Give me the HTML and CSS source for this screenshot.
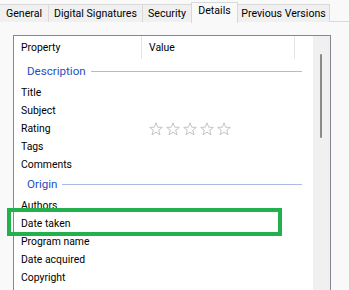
FILE: index.html
```html
<!DOCTYPE html>
<html>

<head>
    <title>Properties - Details</title>
    <link rel="stylesheet" href="styles.css">
</head>

<body>
    <div class="tabs">
        <div class="tab tab-general">General</div>
        <div class="tab tab-signatures">Digital Signatures</div>
        <div class="tab tab-security">Security</div>
        <div class="tab tab-details selected">Details</div>
        <div class="tab tab-versions">Previous Versions</div>
    </div>

    <div class="panel">
        <div class="list-box">
            <div class="list">
                <div class="list-header">
                    <div class="col col-property">Property</div>
                    <div class="col col-value">Value</div>
                </div>

                <div class="group">
                    <span class="group-name">Description</span>
                    <span class="group-line"></span>
                </div>
                <div class="row"><span class="name">Title</span></div>
                <div class="row"><span class="name">Subject</span></div>
                <div class="row">
                    <span class="name">Rating</span>
                    <span class="stars">
                        <svg width="82" height="14" viewBox="0 0 82 14">
                            <g fill="none" stroke="#c4c4c4" stroke-width="1">
                                <path d="M7 0.8 L8.7 5.2 L13.3 5.4 L9.7 8.2 L11 12.8 L7 10.2 L3 12.8 L4.3 8.2 L0.7 5.4 L5.3 5.2 Z" />
                                <path transform="translate(17 0)" d="M7 0.8 L8.7 5.2 L13.3 5.4 L9.7 8.2 L11 12.8 L7 10.2 L3 12.8 L4.3 8.2 L0.7 5.4 L5.3 5.2 Z" />
                                <path transform="translate(34 0)" d="M7 0.8 L8.7 5.2 L13.3 5.4 L9.7 8.2 L11 12.8 L7 10.2 L3 12.8 L4.3 8.2 L0.7 5.4 L5.3 5.2 Z" />
                                <path transform="translate(51 0)" d="M7 0.8 L8.7 5.2 L13.3 5.4 L9.7 8.2 L11 12.8 L7 10.2 L3 12.8 L4.3 8.2 L0.7 5.4 L5.3 5.2 Z" />
                                <path transform="translate(68 0)" d="M7 0.8 L8.7 5.2 L13.3 5.4 L9.7 8.2 L11 12.8 L7 10.2 L3 12.8 L4.3 8.2 L0.7 5.4 L5.3 5.2 Z" />
                            </g>
                        </svg>
                    </span>
                </div>
                <div class="row"><span class="name">Tags</span></div>
                <div class="row"><span class="name">Comments</span></div>

                <div class="group">
                    <span class="group-name">Origin</span>
                    <span class="group-line"></span>
                </div>
                <div class="row"><span class="name">Authors</span></div>
                <div class="row highlighted"><span class="name">Date taken</span></div>
                <div class="row"><span class="name">Program name</span></div>
                <div class="row"><span class="name">Date acquired</span></div>
                <div class="row"><span class="name">Copyright</span></div>
            </div>

            <div class="scrollbar">
                <div class="thumb"></div>
            </div>
        </div>
    </div>
</body>

</html>
```

FILE: styles.css
```css
body {
    font-family: Roboto, 'Noto Sans', sans-serif;
    font-size: 10.4px;
    color: #000;
    background: #f9f9f9;
    margin: 0;
    height: 290px;
    overflow: hidden;
}

/* tab strip */
.tabs {
    display: flex;
    height: 22px;
    border-bottom: 1px solid #d9d9d9;
    box-sizing: border-box;
    padding-top: 4px;
}

.tab {
    height: 18px;
    line-height: 17px;
    font-size: 10.6px;
    background: #f0f0f0;
    border: 1px solid #d9d9d9;
    border-bottom: none;
    border-left: none;
    box-sizing: border-box;
    text-align: center;
    white-space: nowrap;
    overflow: hidden;
}

.tab-general { width: 49px; }
.tab-signatures { width: 94px; }
.tab-security { width: 49px; }
.tab-details { width: 47px; }
.tab-versions { width: 92px; }

.tab.selected {
    background: #f9f9f9;
    height: 21px;
    margin-top: -2px;
    margin-bottom: -1px;
    line-height: 16px;
    border-left: 1px solid #d9d9d9;
    margin-left: -1px;
}

/* list box */
.panel {
    padding: 13px 0 0 13px;
}

.list-box {
    width: 318px;
    height: 255px;
    border: 1px solid #828790;
    border-bottom: none;
    box-sizing: border-box;
    background: #fff;
    display: flex;
}

.list {
    flex: 1;
    padding-left: 7px;
}

.list-header {
    display: flex;
    height: 24px;
}

.col {
    height: 23px;
    line-height: 24px;
    border-right: 1px solid #e5e5e5;
    box-sizing: border-box;
}

.col-property {
    width: 121px;
    margin-right: 7px;
}

.col-value {
    width: 146px;
}

.group {
    display: flex;
    align-items: center;
    height: 22px;
    padding: 0 0 1px 6px;
}

.group-name {
    color: #1d4fc4;
    font-size: 11.6px;
}

.group-line {
    flex: 1;
    height: 1px;
    background: #a9bbe4;
    margin: 1px 11px 0 5px;
}

.row {
    display: flex;
    align-items: center;
    height: 18px;
    position: relative;
}

.name {
    width: 128px;
}

.stars {
    display: flex;
    padding-top: 1px;
}

.row.highlighted::before {
    content: '';
    position: absolute;
    left: -14px;
    top: -6px;
    width: 275px;
    height: 28px;
    border: 4px solid #22b14c;
    box-sizing: border-box;
}

/* scrollbar */
.scrollbar {
    width: 17px;
    background: #f0f0f0;
    position: relative;
}

.thumb {
    position: absolute;
    left: 7px;
    top: 18px;
    width: 2px;
    height: 84px;
    background: #8a8a8a;
    border-radius: 1px;
}
```
